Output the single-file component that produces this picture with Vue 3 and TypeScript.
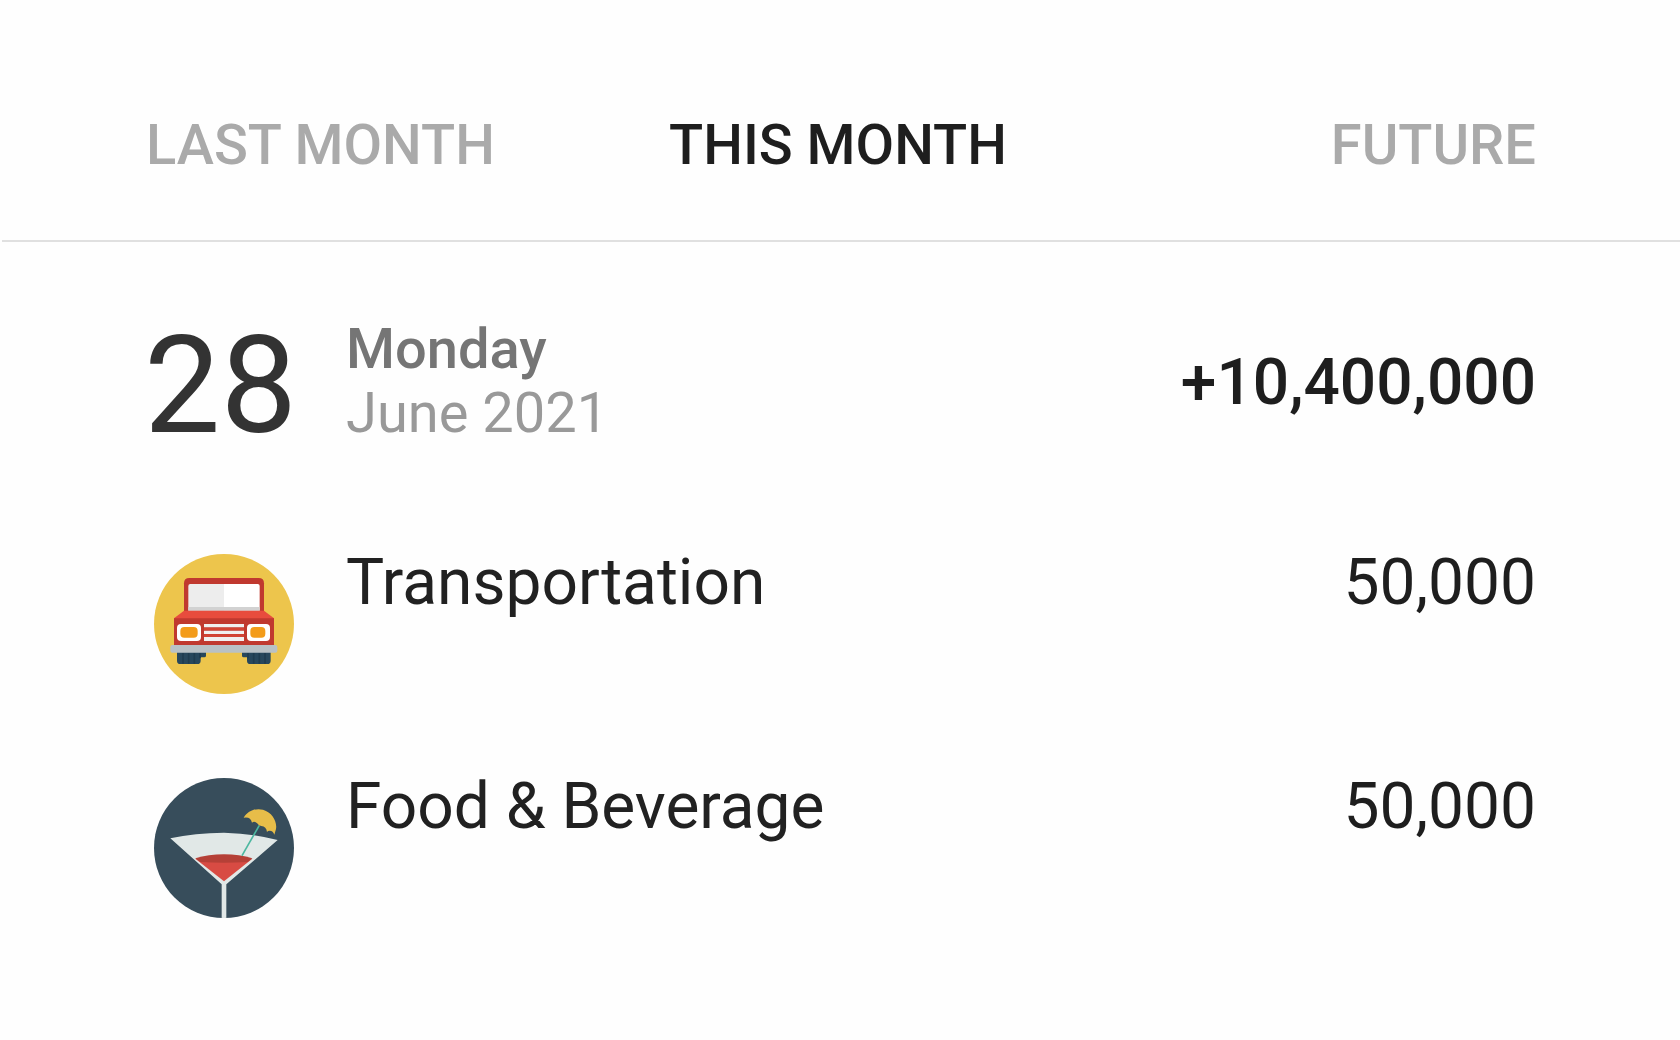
<script setup lang="ts">
import { ref } from 'vue'

type Category = 'car' | 'drink'

interface Entry {
  name: string
  amount: string
  icon: Category
}

const tabs: string[] = ['LAST MONTH', 'THIS MONTH', 'FUTURE']
const active = ref<string>('THIS MONTH')

const entries: Entry[] = [
  { name: 'Transportation', amount: '50,000', icon: 'car' },
  { name: 'Food & Beverage', amount: '50,000', icon: 'drink' },
]
</script>

<template>
  <main class="ledger">
    <nav class="tabs" aria-label="Period">
      <button
        v-for="tab in tabs"
        :key="tab"
        type="button"
        class="tab"
        :class="{ active: tab === active }"
        @click="active = tab"
      >{{ tab }}</button>
    </nav>

    <section class="day">
      <header class="summary">
        <span class="date">28</span>
        <div class="labels">
          <span class="weekday">Monday</span>
          <span class="month">June 2021</span>
        </div>
        <strong class="total">+10,400,000</strong>
      </header>

      <ul class="entries">
        <li v-for="entry in entries" :key="entry.name" class="entry">
          <svg v-if="entry.icon === 'car'" class="icon" viewBox="27 27 420 420" aria-hidden="true">
            <circle cx="237" cy="237" r="210" fill="#edc54c" />
            <path d="M96 320H183V332Q183 337 178 337H167V347Q167 357 157 357H106Q96 357 96 347Z" fill="#27475c" />
            <path d="M291 320H377V347Q377 357 367 357H316Q306 357 306 347V337H296Q291 337 291 332Z" fill="#27475c" />
            <path d="M114 323V356M131 323V356M148 323V356M165 323V340M309 323V340M326 323V356M343 323V356M360 323V356" stroke="#1f3c4f" stroke-width="5" />
            <path d="M117 200V115Q117 99 133 99H341Q357 99 357 115V200Z" fill="#c0392f" />
            <path d="M237 117V197H130V123Q130 117 136 117Z" fill="#ededed" />
            <path d="M237 117H338Q344 117 344 123V197H237Z" fill="#fff" />
            <path d="M130 186H344V197H130Z" fill="#d2d2d2" />
            <path d="M87 219H387V302H87Z" fill="#c0392f" />
            <path d="M117 197H357L387 220H87Z" fill="#e84c3d" />
            <path d="M177 248H297V256H177ZM177 268H297V276H177Z" fill="#d34435" />
            <path d="M177 237H297V247H177ZM177 257H297V267H177ZM177 276H297V288H177Z" fill="#f0f0f0" />
            <rect x="96" y="237" width="72" height="51" rx="12" fill="#fff" />
            <rect x="306" y="237" width="69" height="51" rx="12" fill="#fff" />
            <rect x="106" y="246" width="52" height="32" rx="12" fill="#f39c1b" />
            <rect x="316" y="246" width="45" height="32" rx="12" fill="#f39c1b" />
            <rect x="76" y="300" width="321" height="23" rx="6" fill="#b9c1c5" />
          </svg>
          <svg v-else class="icon" viewBox="27 24 420 420" aria-hidden="true">
            <defs>
              <clipPath id="drink-disc"><circle cx="237" cy="234" r="210" /></clipPath>
            </defs>
            <circle cx="237" cy="234" r="210" fill="#374d5b" />
            <g clip-path="url(#drink-disc)">
              <path d="M76 205Q150 189 237 188Q324 190 398 210L244 343V446H230V343Z" fill="#e1e8e7" />
              <path d="M151 266H322L237 334Z" fill="#d84b43" />
              <path d="M151 265Q190 253 237 253Q284 253 322 265L308 276Q237 280 166 276Z" fill="#b54037" />
              <path d="M291 257L343 166" stroke="#4cb8a0" stroke-width="5" fill="none" />
              <path d="M296 143C310 121 332 114 354 119C382 127 397 155 393 177L388 194Q383 179 369 183L366 186Q364 169 349 168L342 166Q330 150 321 158Q317 139 296 143Z" fill="#e7bd49" />
            </g>
          </svg>
          <span class="name">{{ entry.name }}</span>
          <span class="amount">{{ entry.amount }}</span>
        </li>
      </ul>
    </section>
  </main>
</template>

<style>
body {
  margin: 0;
  background: #fefefe;
}
</style>

<style scoped>
.ledger {
  font-family: Roboto, "Noto Sans", sans-serif;
  color: #1e1e1e;
}

.tabs {
  display: grid;
  grid-template-columns: 87fr auto 88fr;
  margin-left: 2px;
  padding: 113px 144px 63px;
  border-bottom: 2px solid #e0e0e0;
}

.tab {
  justify-self: start;
  margin: 0;
  padding: 0;
  border: 0;
  background: none;
  font: 500 56px/64px Roboto, "Noto Sans", sans-serif;
  color: #aaa;
  cursor: pointer;
}

.tab:last-child {
  justify-self: end;
}

.tab.active {
  color: #1e1e1e;
}

.day {
  padding: 75px 144px 80px;
}

.summary {
  display: flex;
  align-items: flex-start;
}

.date {
  width: 202px;
  font-size: 136px;
  line-height: 138px;
  color: #333;
}

.labels {
  display: flex;
  flex: 1;
  flex-direction: column;
  font-size: 56px;
  line-height: 64px;
}

.weekday {
  font-weight: 500;
  color: #757575;
}

.month {
  color: #999;
}

.total {
  font-size: 64px;
  font-weight: 500;
  line-height: 132px;
}

.entries {
  display: flex;
  flex-direction: column;
  gap: 81px;
  margin: 0;
  padding: 96px 0 0;
  list-style: none;
}

.entry {
  display: flex;
  align-items: flex-start;
  font-size: 64px;
  line-height: 64px;
}

.icon {
  flex: none;
  width: 140px;
  height: 140px;
  margin: 3px 52px 0 10px;
}

.name {
  flex: 1;
  color: #212121;
}
</style>
